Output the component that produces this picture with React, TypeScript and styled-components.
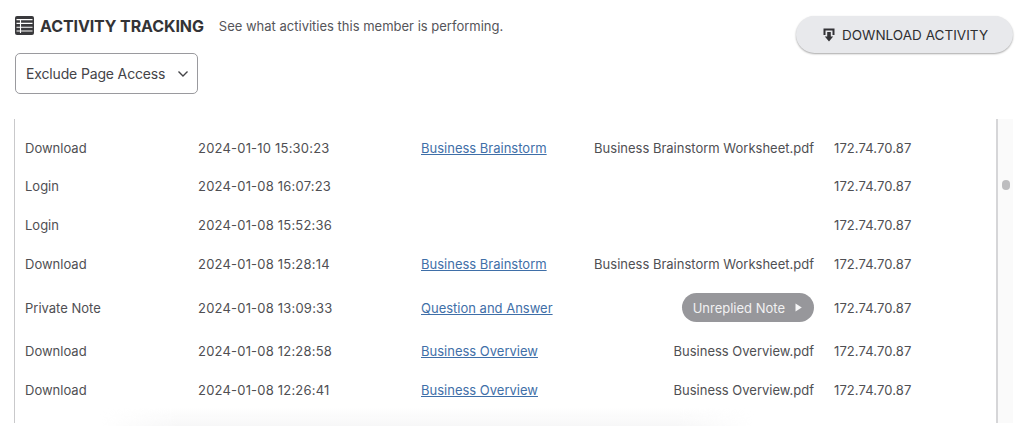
import * as React from "react";
import styled, { createGlobalStyle } from "styled-components";

const GlobalStyle = createGlobalStyle`
  html, body {
    margin: 0;
    padding: 0;
    background: #fff;
    overflow: hidden;
  }
  body {
    font-family: Inter, "Liberation Sans", sans-serif;
    color: #4a4a4d;
  }
`;

const Page = styled.div`
  width: 1024px;
  height: 426px;
  overflow: hidden;
  position: relative;
  display: flex;
  flex-direction: column;
  padding: 15px 11px 0 15px;
  box-sizing: border-box;
`;

const Header = styled.div`
  display: flex;
  justify-content: space-between;
  align-items: flex-start;
  height: 104px;
  flex-shrink: 0;
`;

const HeaderLeft = styled.div`
  display: flex;
  flex-direction: column;
  gap: 17px;
`;

const TitleRow = styled.div`
  display: flex;
  align-items: center;
  height: 21px;
`;

const Title = styled.h2`
  margin: 0 15px 0 6px;
  font-size: 16px;
  font-weight: 700;
  color: #333336;
  letter-spacing: -0.1px;
`;

const Subtitle = styled.span`
  font-size: 13px;
  color: #55555a;
`;

const Select = styled.div`
  box-sizing: border-box;
  width: 183px;
  height: 41px;
  display: flex;
  align-items: center;
  justify-content: space-between;
  padding: 0 8px 0 10px;
  border: 1px solid #9a9a9e;
  border-radius: 5px;
  font-size: 14px;
  letter-spacing: -0.15px;
  color: #444448;
`;

const DownloadButton = styled.button`
  display: flex;
  align-items: center;
  justify-content: center;
  gap: 7px;
  width: 217px;
  height: 37px;
  margin: 1px 0 0;
  padding: 0 0 0 2px;
  border: 0;
  border-radius: 19px;
  background: #e8e9ec;
  box-shadow: 0 1px 2px rgba(0, 0, 0, 0.35);
  font-family: inherit;
  font-size: 13.5px;
  letter-spacing: 0.03px;
  color: #2f2f32;
`;

const Panel = styled.div`
  flex: 1;
  display: flex;
  min-height: 0;
  margin: 0 0 3px -1px;
`;

const TableArea = styled.div`
  width: 985px;
  box-sizing: border-box;
  border-left: 1px solid #c9c9cb;
  border-right: 2px solid #d6d6d8;
  padding: 9.3px 0 0 10px;
`;

const Row = styled.div<{ $tall?: boolean }>`
  display: grid;
  grid-template-columns: 173px 223px 173px 220px 1fr;
  align-items: center;
  height: ${(p) => (p.$tall ? "49px" : "38.7px")};
  font-size: 13px;
  color: #4f4f53;
`;

const DateCell = styled.div`
  letter-spacing: 0.2px;
`;

const TopicLink = styled.a`
  color: #3f6fa8;
  text-decoration: underline;
`;

const FileCell = styled.div`
  justify-self: end;
  white-space: nowrap;
`;

const IpCell = styled.div`
  padding-left: 20px;
  letter-spacing: 0.1px;
`;

const NoteBadge = styled.span`
  display: inline-flex;
  align-items: center;
  gap: 10px;
  height: 29px;
  padding: 0 12px 0 11px;
  border-radius: 15px;
  background: #97979b;
  color: #f1f1f2;
`;

const Scrollbar = styled.div`
  width: 15px;
  background: #fafafa;
  position: relative;
`;

const Thumb = styled.div`
  position: absolute;
  top: 61px;
  left: 4px;
  width: 8px;
  height: 10px;
  border-radius: 4px;
  background: #bdbdbf;
`;

const BottomFade = styled.div`
  position: absolute;
  left: 100px;
  right: 270px;
  bottom: 0;
  height: 18px;
  background: linear-gradient(to bottom, rgba(243, 243, 244, 0), rgba(243, 243, 244, 0.7));
  mask-image: linear-gradient(to right, transparent, #000 12%, #000 88%, transparent);
`;

function TableIcon() {
  return (
    <svg width="19" height="19" viewBox="0 0 19 19">
      <rect width="19" height="19" rx="2" fill="#3a3a3d" />
      <path d="M5.5 3v14M1.5 3.6h16M1.5 7.4h16M1.5 11.2h16M1.5 15h16" stroke="#fff" strokeWidth="1.1" fill="none" />
    </svg>
  );
}

function ChevronIcon() {
  return (
    <svg width="12" height="8" viewBox="0 0 12 8">
      <path d="M1.5 1.5 6 6l4.5-4.5" stroke="#444448" strokeWidth="1.4" fill="none" />
    </svg>
  );
}

function DownloadIcon() {
  return (
    <svg width="12" height="14" viewBox="0 0 12 14">
      <path d="M0.5 0.5h11v6.5h-2v-4.5h-7v4.5h-2z" fill="#333336" />
      <path d="M4.2 4h3.6v4.5h2.4L6 13.5 1.8 8.5h2.4z" fill="#333336" />
    </svg>
  );
}

function PlayIcon() {
  return (
    <svg width="7" height="9" viewBox="0 0 7 9">
      <path d="M0.5 0.5 6.8 4.5l-6.3 4z" fill="#f6f6f7" />
    </svg>
  );
}

interface Activity {
  type: string;
  time: string;
  topic?: string;
  file?: string;
  note?: boolean;
}

const activities: Activity[] = [
  { type: "Download", time: "2024-01-10 15:30:23", topic: "Business Brainstorm", file: "Business Brainstorm Worksheet.pdf" },
  { type: "Login", time: "2024-01-08 16:07:23" },
  { type: "Login", time: "2024-01-08 15:52:36" },
  { type: "Download", time: "2024-01-08 15:28:14", topic: "Business Brainstorm", file: "Business Brainstorm Worksheet.pdf" },
  { type: "Private Note", time: "2024-01-08 13:09:33", topic: "Question and Answer", note: true },
  { type: "Download", time: "2024-01-08 12:28:58", topic: "Business Overview", file: "Business Overview.pdf" },
  { type: "Download", time: "2024-01-08 12:26:41", topic: "Business Overview", file: "Business Overview.pdf" },
];

export default function App() {
  return (
    <Page>
      <GlobalStyle />
      <Header>
        <HeaderLeft>
          <TitleRow>
            <TableIcon />
            <Title>ACTIVITY TRACKING</Title>
            <Subtitle>See what activities this member is performing.</Subtitle>
          </TitleRow>
          <Select>
            Exclude Page Access
            <ChevronIcon />
          </Select>
        </HeaderLeft>
        <DownloadButton type="button">
          <DownloadIcon />
          DOWNLOAD ACTIVITY
        </DownloadButton>
      </Header>
      <Panel>
        <TableArea>
          {activities.map((a) => (
            <Row key={a.time} $tall={a.note}>
              <div>{a.type}</div>
              <DateCell>{a.time}</DateCell>
              <div>{a.topic && <TopicLink href="#">{a.topic}</TopicLink>}</div>
              <FileCell>
                {a.file}
                {a.note && (
                  <NoteBadge>
                    Unreplied Note
                    <PlayIcon />
                  </NoteBadge>
                )}
              </FileCell>
              <IpCell>172.74.70.87</IpCell>
            </Row>
          ))}
        </TableArea>
        <Scrollbar>
          <Thumb />
        </Scrollbar>
      </Panel>
      <BottomFade />
    </Page>
  );
}
